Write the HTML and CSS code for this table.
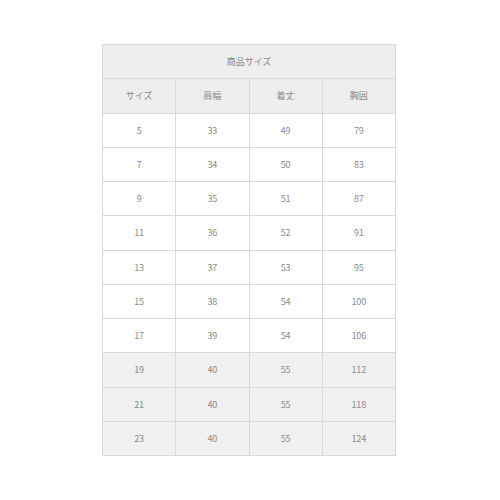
FILE: index.html
```html
<!DOCTYPE html>
<html lang="ja">
<head>
<meta charset="utf-8">
<link rel="stylesheet" href="styles.css">
</head>
<body>
<div class="wrap">
<table class="size-table">
<thead>
<tr><th colspan="4" class="title">商品サイズ</th></tr>
<tr><th>サイズ</th><th>肩幅</th><th>着丈</th><th>胸囲</th></tr>
</thead>
<tbody>
<tr><td>5</td><td>33</td><td>49</td><td>79</td></tr>
<tr><td>7</td><td>34</td><td>50</td><td>83</td></tr>
<tr><td>9</td><td>35</td><td>51</td><td>87</td></tr>
<tr><td>11</td><td>36</td><td>52</td><td>91</td></tr>
<tr><td>13</td><td>37</td><td>53</td><td>95</td></tr>
<tr><td>15</td><td>38</td><td>54</td><td>100</td></tr>
<tr><td>17</td><td>39</td><td>54</td><td>106</td></tr>
<tr class="shade"><td>19</td><td>40</td><td>55</td><td>112</td></tr>
<tr class="shade"><td>21</td><td>40</td><td>55</td><td>118</td></tr>
<tr class="shade"><td>23</td><td>40</td><td>55</td><td>124</td></tr>
</tbody>
</table>
</div>
</body>
</html>
```

FILE: styles.css
```css
html, body {
  margin: 0;
  padding: 0;
  background: #ffffff;
}
.wrap {
  padding: 44px 0 0 102px;
}
.size-table {
  border-collapse: collapse;
  width: 294px;
  table-layout: fixed;
  font-family: "Noto Sans CJK JP", "Noto Sans", sans-serif;
  font-size: 9px;
  color: #8a8a8a;
}
.size-table th,
.size-table td {
  border: 1px solid #d9d9d9;
  height: 33.25px;
  padding: 0;
  text-align: center;
  vertical-align: middle;
  font-weight: normal;
  line-height: 1;
}
.size-table th {
  background: #eeeeee;
}
.size-table tr.shade td {
  background: #f0f0f0;
}
```
